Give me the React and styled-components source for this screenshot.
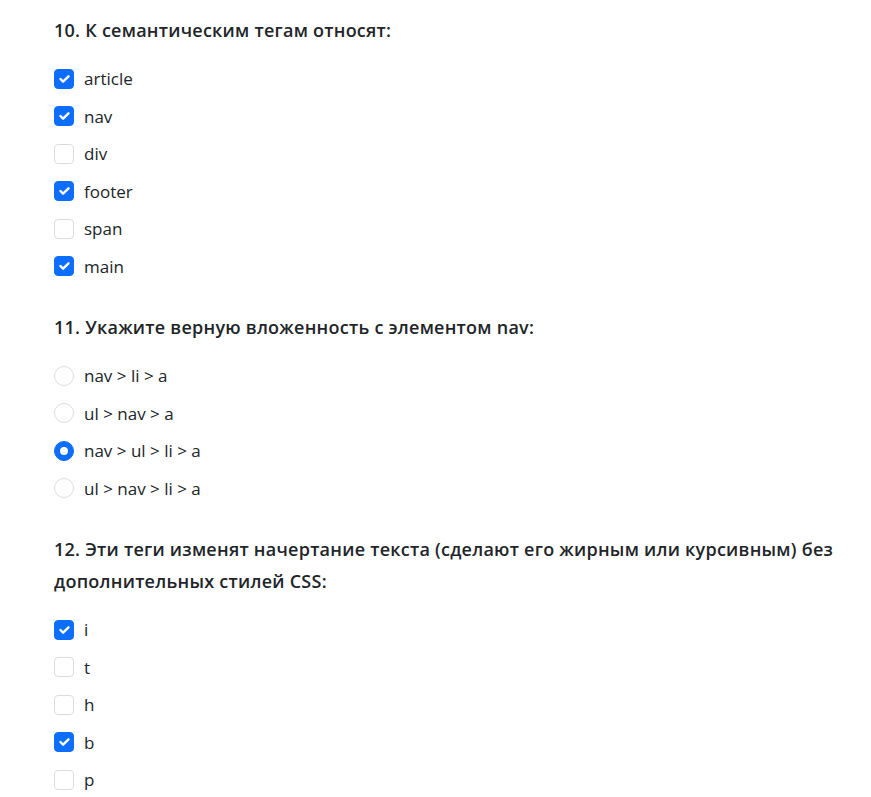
import React from "react";
import styled, { createGlobalStyle } from "styled-components";

const Global = createGlobalStyle`
  html, body { margin: 0; padding: 0; background: #fff; }
  body { font-family: "Open Sans", "Noto Sans", sans-serif; color: #212529; }
`;

const Page = styled.div`
  padding: 14px 18px 0 54px;
  display: flex;
  flex-direction: column;
`;

const Question = styled.section`
  display: flex;
  flex-direction: column;
  margin-bottom: 26px;
`;

const Title = styled.h3`
  margin: 0 0 14px;
  font-size: 18px;
  letter-spacing: 0.25px;
  font-weight: 600;
  line-height: 32px;
  color: #212529;
`;

const Option = styled.label`
  display: flex;
  align-items: center;
  gap: 10px;
  height: 37.5px;
  font-size: 17px;
  color: #212529;
`;

const Box = styled.span`
  width: 20px;
  height: 20px;
  box-sizing: border-box;
  flex: none;
  border-radius: ${(p) => (p.$radio ? "50%" : "4px")};
  border: 1px solid ${(p) => (p.$checked ? "#0d6efd" : "#dadde0")};
  background: ${(p) => (p.$checked ? "#0d6efd" : "#fff")};
  display: flex;
  align-items: center;
  justify-content: center;
`;

const Dot = styled.span`
  width: 8px;
  height: 8px;
  border-radius: 50%;
  background: #fff;
`;

const Check = () => (
  <svg width="20" height="20" viewBox="0 0 20 20">
    <path d="M6 10l3 3 6-6" fill="none" stroke="#fff" strokeWidth="2.6" strokeLinecap="round" strokeLinejoin="round" />
  </svg>
);

const questions = [
  {
    title: "10. К семантическим тегам относят:",
    type: "checkbox",
    options: [
      ["article", true],
      ["nav", true],
      ["div", false],
      ["footer", true],
      ["span", false],
      ["main", true],
    ],
  },
  {
    title: "11. Укажите верную вложенность с элементом nav:",
    type: "radio",
    options: [
      ["nav > li > a", false],
      ["ul > nav > a", false],
      ["nav > ul > li > a", true],
      ["ul > nav > li > a", false],
    ],
  },
  {
    title: "12. Эти теги изменят начертание текста (сделают его жирным или курсивным) без дополнительных стилей CSS:",
    type: "checkbox",
    options: [
      ["i", true],
      ["t", false],
      ["h", false],
      ["b", true],
      ["p", false],
    ],
  },
];

export default function App() {
  return (
    <>
      <Global />
      <Page>
        {questions.map((q) => (
          <Question key={q.title}>
            <Title>{q.title}</Title>
            {q.options.map(([text, checked]) => (
              <Option key={text}>
                <Box $radio={q.type === "radio"} $checked={checked}>
                  {checked && (q.type === "radio" ? <Dot /> : <Check />)}
                </Box>
                {text}
              </Option>
            ))}
          </Question>
        ))}
      </Page>
    </>
  );
}
